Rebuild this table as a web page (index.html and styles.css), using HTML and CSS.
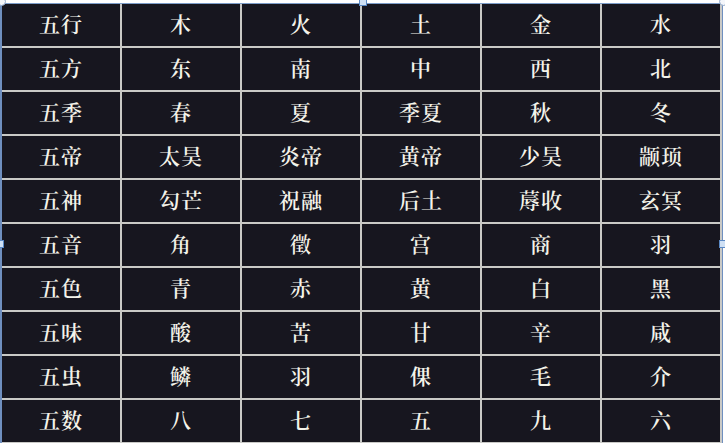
FILE: index.html
```html
<!DOCTYPE html>
<html lang="zh">
<head>
<meta charset="utf-8">
<title>五行表</title>
<link rel="stylesheet" href="styles.css">
</head>
<body>
<div class="frame">
  <div class="grid">
    <div class="cell">五行</div><div class="cell">木</div><div class="cell">火</div><div class="cell">土</div><div class="cell">金</div><div class="cell">水</div>
    <div class="cell">五方</div><div class="cell">东</div><div class="cell">南</div><div class="cell">中</div><div class="cell">西</div><div class="cell">北</div>
    <div class="cell">五季</div><div class="cell">春</div><div class="cell">夏</div><div class="cell">季夏</div><div class="cell">秋</div><div class="cell">冬</div>
    <div class="cell">五帝</div><div class="cell">太昊</div><div class="cell">炎帝</div><div class="cell">黄帝</div><div class="cell">少昊</div><div class="cell">颛顼</div>
    <div class="cell">五神</div><div class="cell">勾芒</div><div class="cell">祝融</div><div class="cell">后土</div><div class="cell">蓐收</div><div class="cell">玄冥</div>
    <div class="cell">五音</div><div class="cell">角</div><div class="cell">徵</div><div class="cell">宫</div><div class="cell">商</div><div class="cell">羽</div>
    <div class="cell">五色</div><div class="cell">青</div><div class="cell">赤</div><div class="cell">黄</div><div class="cell">白</div><div class="cell">黑</div>
    <div class="cell">五味</div><div class="cell">酸</div><div class="cell">苦</div><div class="cell">甘</div><div class="cell">辛</div><div class="cell">咸</div>
    <div class="cell">五虫</div><div class="cell">鳞</div><div class="cell">羽</div><div class="cell">倮</div><div class="cell">毛</div><div class="cell">介</div>
    <div class="cell">五数</div><div class="cell">八</div><div class="cell">七</div><div class="cell">五</div><div class="cell">九</div><div class="cell">六</div>
  </div>
  <span class="handle round tl"></span>
  <span class="handle round tr"></span>
  <span class="handle square tm"></span>
  <span class="handle square ml"></span>
  <span class="handle square mr"></span>
</div>
</body>
</html>
```
FILE: styles.css
```css
html, body {
  margin: 0;
  padding: 0;
  background: #ffffff;
  overflow: hidden;
}
.frame {
  position: relative;
  width: 720px;
  margin-top: 3px;
  border-top: 1px solid #7c9cc8;
  border-left: 2px solid #6f8fbf;
  border-right: 1px solid #6f8fbf;
  background: #17161f;
}
.grid {
  display: grid;
  grid-template-columns: repeat(6, 120px);
  grid-auto-rows: 44px;
}
.cell {
  box-sizing: border-box;
  border-right: 2px solid #c9c9c6;
  border-bottom: 2px solid #c9c9c6;
  display: flex;
  align-items: center;
  justify-content: center;
  padding-bottom: 4px;
  color: #f4f3ea;
  font-family: "Noto Serif CJK SC", "Noto Sans CJK SC", serif;
  font-size: 21px;
  font-weight: 600;
  letter-spacing: 1px;
}
.handle {
  position: absolute;
  box-sizing: border-box;
  width: 9px;
  height: 9px;
}
.round {
  border-radius: 50%;
  background: #f4f6fa;
  border: 1px solid #8ea6c8;
}
.square {
  background: #cfe0f4;
  border: 1px solid #5a88c4;
  width: 8px;
  height: 8px;
}
.tl { left: -5px; top: -7px; }
.tr { right: -6px; top: -7px; }
.tm { left: 357px; top: -6px; }
.ml { left: -6px; top: 236px; }
.mr { right: -5px; top: 236px; }
```
